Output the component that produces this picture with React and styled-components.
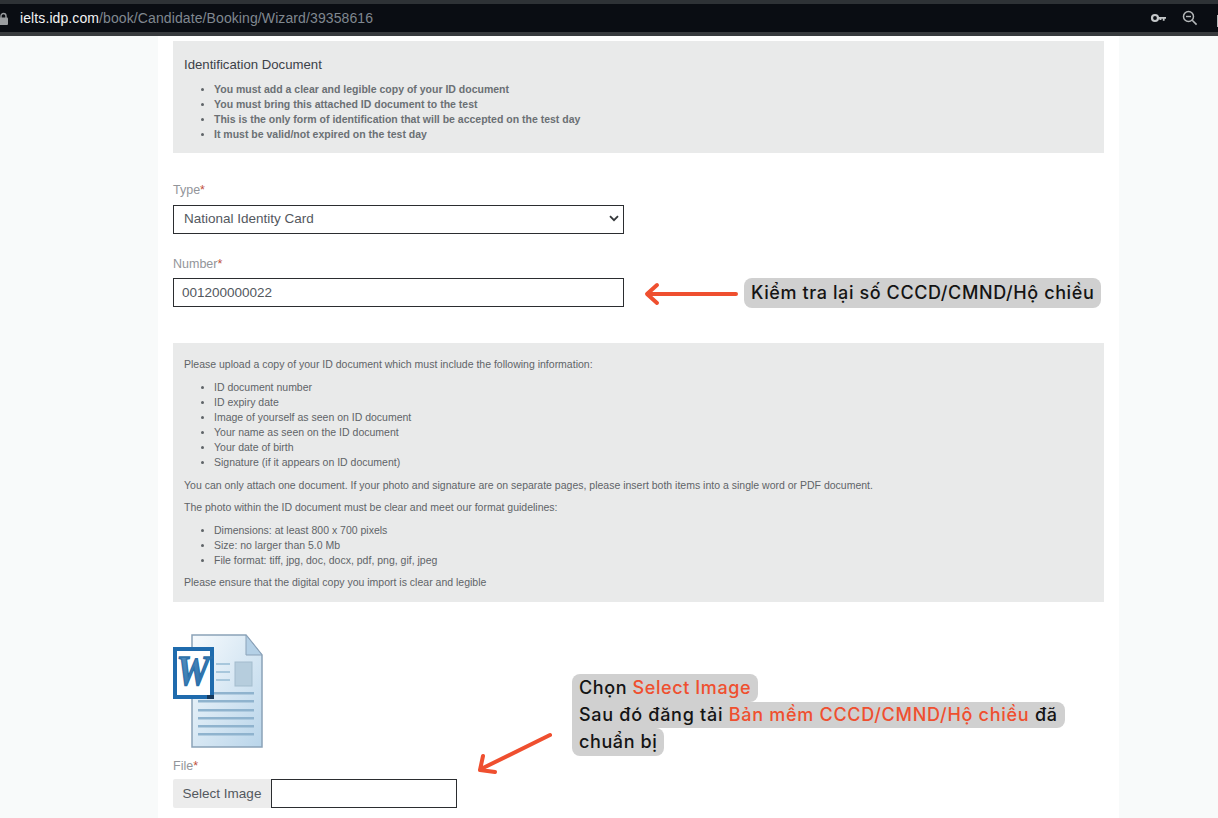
import React from 'react';
import styled, { createGlobalStyle } from 'styled-components';

const GlobalStyle = createGlobalStyle`
  html, body {
    margin: 0;
    height: 818px;
    overflow: hidden;
    background: #f8fafa;
    font-family: "Liberation Sans", Arial, sans-serif;
  }
`;

const Page = styled.div`
  position: relative;
  width: 1218px;
  height: 818px;
  overflow: hidden;
`;

const BrowserBar = styled.div`
  height: 28px;
  border-top: 4px solid #2e3236;
  border-bottom: 4px solid #383b3e;
  background: #0a0d13;
  display: flex;
  align-items: center;
`;

const Lock = styled.svg`
  width: 9px;
  height: 13px;
  margin-left: -1px;
  margin-right: 12px;
  flex-shrink: 0;
`;

const Url = styled.div`
  flex: 1;
  min-width: 0;
  font-size: 14px;
  letter-spacing: 0.1px;
  color: #808890;
`;

const Host = styled.span`
  color: #f2f3f4;
`;

const BarIcon = styled.svg`
  width: 18px;
  height: 18px;
  flex-shrink: 0;
  margin-left: ${(p) => p.$left}px;
`;

const Sheet = styled.main`
  width: 931px;
  height: 782px;
  margin-left: 158px;
  padding: 5px 15px 0;
  background: #fff;
`;

const InfoPanel = styled.section`
  background: #e9eaea;
  color: #5f6468;
  font-size: 10.5px;
  padding: ${(p) => p.$pad};
  height: ${(p) => p.$height}px;
  margin-top: ${(p) => p.$top || 0}px;
  box-sizing: border-box;
`;

const PanelTitle = styled.div`
  font-size: 13.2px;
  color: #3c4148;
  line-height: 16px;
  margin-bottom: 9px;
`;

const BulletList = styled.ul`
  margin: ${(p) => p.$margin || '0'};
  padding: 0 0 0 30px;
  list-style: none;
`;

const Bullet = styled.li`
  position: relative;
  line-height: 15px;
  font-weight: ${(p) => (p.$strong ? 700 : 400)};
  color: ${(p) => (p.$strong ? '#6b7074' : 'inherit')};

  &::before {
    content: '';
    position: absolute;
    left: -13px;
    top: 6px;
    width: 3px;
    height: 3px;
    border-radius: 50%;
    background: #5f6468;
  }
`;

const PanelLine = styled.p`
  margin: ${(p) => p.$margin};
  line-height: 15px;
`;

const FieldLabel = styled.label`
  display: block;
  font-size: 12.5px;
  line-height: 14px;
  color: #92959a;
  margin: ${(p) => p.$margin};
`;

const Required = styled.span`
  color: #c0503c;
`;

const InputBox = styled.div`
  box-sizing: border-box;
  width: ${(p) => p.$width}px;
  height: 29px;
  border: 1px solid #2b2d30;
  background: #fff;
  display: flex;
  align-items: center;
  justify-content: space-between;
  padding: ${(p) => p.$pad || '0 8px'};
  font-size: 13.5px;
  color: #53585e;
`;

const Chevron = styled.svg`
  width: 10px;
  height: 7px;
`;

const WordIcon = styled.svg`
  display: block;
  width: 90px;
  height: 114px;
  margin-top: 32px;
`;

const FileRow = styled.div`
  display: flex;
  margin-top: 6px;
`;

const SelectButton = styled.button`
  height: 29px;
  width: 98px;
  border: 0;
  border-radius: 2px 0 0 2px;
  background: #ececec;
  color: #53585e;
  font-family: inherit;
  font-size: 13.5px;
  padding: 0;
`;

const Note = styled.div`
  position: absolute;
  left: ${(p) => p.$left}px;
  top: ${(p) => p.$top}px;
  display: flex;
  flex-direction: column;
  align-items: flex-start;
`;

const Chip = styled.div`
  height: ${(p) => p.$height}px;
  line-height: ${(p) => p.$height}px;
  padding: 0 7px;
  background: #d0d0d0;
  border-radius: ${(p) => p.$corners || '8px'};
  font-family: Inter, "Noto Sans", sans-serif;
  font-size: 18px;
  font-weight: 500;
  letter-spacing: ${(p) => p.$spacing || '0.6px'};
  color: #141414;
  white-space: nowrap;
`;

const Accent = styled.span`
  color: #ef4f2f;
`;

const Arrow = styled.svg`
  position: absolute;
  left: ${(p) => p.$left}px;
  top: ${(p) => p.$top}px;
`;

const idRules = [
  'You must add a clear and legible copy of your ID document',
  'You must bring this attached ID document to the test',
  'This is the only form of identification that will be accepted on the test day',
  'It must be valid/not expired on the test day',
];

const idContents = [
  'ID document number',
  'ID expiry date',
  'Image of yourself as seen on ID document',
  'Your name as seen on the ID document',
  'Your date of birth',
  'Signature (if it appears on ID document)',
];

const formatRules = [
  'Dimensions: at least 800 x 700 pixels',
  'Size: no larger than 5.0 Mb',
  'File format: tiff, jpg, doc, docx, pdf, png, gif, jpeg',
];

const App = () => (
  <Page>
    <GlobalStyle />
    <BrowserBar>
      <Lock viewBox="0 0 9 13">
        <path d="M2 6V4a2.5 2.5 0 0 1 5 0v2" fill="none" stroke="#9a9da0" strokeWidth="1.4" />
        <rect x="0" y="5.5" width="9" height="7.5" rx="1" fill="#9a9da0" />
      </Lock>
      <Url>
        <Host>ielts.idp.com</Host>/book/Candidate/Booking/Wizard/39358616
      </Url>
      <BarIcon $left={0} viewBox="0 0 18 18">
        <circle cx="5" cy="9" r="3" fill="none" stroke="#c4c7c9" strokeWidth="2.2" />
        <path d="M8 8h8v1.8h-1.4v2h-1.8v-2h-1.4v1.2H9.4V9.8H8z" fill="#c4c7c9" />
      </BarIcon>
      <BarIcon $left={13} viewBox="0 0 18 18">
        <circle cx="7.5" cy="7.5" r="5" fill="none" stroke="#b4b7b9" strokeWidth="1.5" />
        <path d="M11.2 11.2 15.6 15.6" stroke="#b4b7b9" strokeWidth="1.6" />
        <path d="M5 7.5h5" stroke="#b4b7b9" strokeWidth="1.4" />
      </BarIcon>
      <BarIcon $left={17} viewBox="0 0 18 18" style={{ marginRight: -16 }}>
        <path d="M1 6h4V3.5a2 2 0 0 1 4 0V6h5v12H1z" fill="#b4b7b9" />
      </BarIcon>
    </BrowserBar>

    <Sheet>
      <InfoPanel $pad="16px 11px 0" $height={112}>
        <PanelTitle>Identification Document</PanelTitle>
        <BulletList>
          {idRules.map((rule) => (
            <Bullet key={rule} $strong>{rule}</Bullet>
          ))}
        </BulletList>
      </InfoPanel>

      <FieldLabel $margin="30px 0 8px">Type<Required>*</Required></FieldLabel>
      <InputBox $width={451} $pad="0 4px 2px 10px">
        National Identity Card
        <Chevron viewBox="0 0 10 7">
          <path d="M1 1.2 5 5.2 9 1.2" fill="none" stroke="#33373a" strokeWidth="1.8" />
        </Chevron>
      </InputBox>

      <FieldLabel $margin="23px 0 7px">Number<Required>*</Required></FieldLabel>
      <InputBox $width={451}>001200000022</InputBox>

      <InfoPanel $pad="14px 11px 0" $height={259} $top={36}>
        <PanelLine $margin="0">Please upload a copy of your ID document which must include the following information:</PanelLine>
        <BulletList $margin="8px 0 0">
          {idContents.map((item) => (
            <Bullet key={item}>{item}</Bullet>
          ))}
        </BulletList>
        <PanelLine $margin="8px 0 0">You can only attach one document. If your photo and signature are on separate pages, please insert both items into a single word or PDF document.</PanelLine>
        <PanelLine $margin="7px 0 0">The photo within the ID document must be clear and meet our format guidelines:</PanelLine>
        <BulletList $margin="8px 0 0">
          {formatRules.map((item) => (
            <Bullet key={item}>{item}</Bullet>
          ))}
        </BulletList>
        <PanelLine $margin="7px 0 0">Please ensure that the digital copy you import is clear and legible</PanelLine>
      </InfoPanel>

      <WordIcon viewBox="0 0 90 114">
        <defs>
          <linearGradient id="sheetFill" x1="0" y1="0" x2="1" y2="1">
            <stop offset="0" stopColor="#f6fafd" />
            <stop offset="1" stopColor="#b9d5ea" />
          </linearGradient>
          <linearGradient id="wordFill" x1="0" y1="0" x2="1" y2="1">
            <stop offset="0" stopColor="#5d95c2" />
            <stop offset="1" stopColor="#1f66a6" />
          </linearGradient>
        </defs>
        <path d="M19 1H73L89 21V113H19Z" fill="url(#sheetFill)" stroke="#8ba2b8" strokeWidth="1.5" />
        <path d="M73 1V21H89Z" fill="#b4d0e6" stroke="#8ba2b8" strokeWidth="1" />
        <rect x="62" y="28" width="17" height="24" fill="#b6cddd" stroke="#a3bccd" />
        {[29, 37, 45].map((y) => (
          <rect key={y} x="43" y={y} width="14" height="2" fill="#a8c7dc" />
        ))}
        {[58, 66, 75, 83, 91, 99].map((y) => (
          <rect key={y} x="25" y={y} width="56" height="2.5" fill="#8fb3ce" />
        ))}
        <rect x="0" y="13" width="41" height="52" fill="#1f6bad" />
        <rect x="4" y="17" width="33" height="44" fill="#fff" />
        <rect x="34" y="61" width="7" height="4" fill="#16395c" />
        <text x="20" y="51" textAnchor="middle" fontFamily="Liberation Serif, serif" fontWeight="700" fontStyle="italic" fontSize="42" textLength="33" lengthAdjust="spacingAndGlyphs" fill="url(#wordFill)" stroke="#2a6fa9" strokeWidth="1.4">W</text>
      </WordIcon>

      <FieldLabel $margin="11px 0 0">File<Required>*</Required></FieldLabel>
      <FileRow>
        <SelectButton>Select Image</SelectButton>
        <InputBox $width={186} />
      </FileRow>
    </Sheet>

    <Arrow $left={644} $top={282} width="94" height="24" viewBox="0 0 94 24">
      <path d="M92 12H4M13 3 3 12l10 9" fill="none" stroke="#ef4f2f" strokeWidth="4" strokeLinecap="round" strokeLinejoin="round" />
    </Arrow>
    <Note $left={744} $top={278}>
      <Chip $height={30}>Kiểm tra lại số CCCD/CMND/Hộ chiều</Chip>
    </Note>

    <Note $left={572} $top={674}>
      <Chip $height={28} $corners="8px 8px 8px 0">Chọn <Accent>Select Image</Accent></Chip>
      <Chip $height={26} $corners="0 8px 8px 0" $spacing="0.72px">Sau đó đăng tải <Accent>Bản mềm CCCD/CMND/Hộ chiều</Accent> đã</Chip>
      <Chip $height={28} $corners="0 8px 8px 8px">chuẩn bị</Chip>
    </Note>
    <Arrow $left={476} $top={730} width="78" height="44" viewBox="0 0 78 44">
      <path d="M74 5 5 39M7 26 4 40l15 2" fill="none" stroke="#ef4f2f" strokeWidth="4" strokeLinecap="round" strokeLinejoin="round" />
    </Arrow>
  </Page>
);

export default App;
